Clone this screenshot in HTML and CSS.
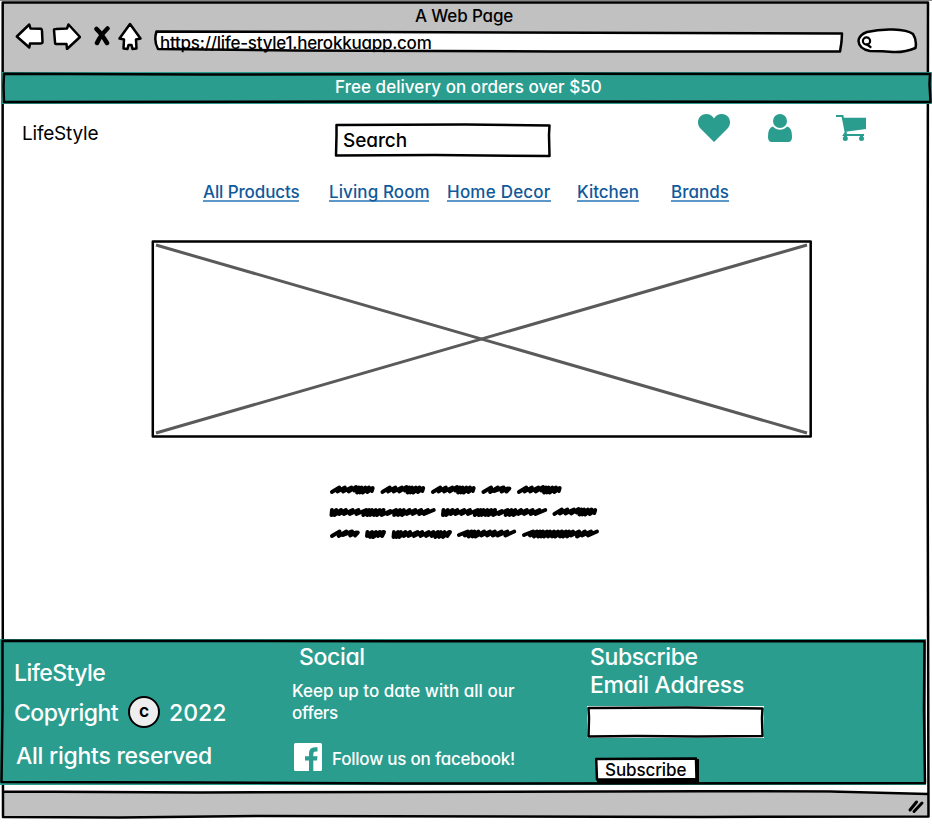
FILE: index.html
```html
<!DOCTYPE html>
<html lang="en">
<head>
<meta charset="utf-8">
<title>A Web Page</title>
<link rel="stylesheet" href="styles.css">
</head>
<body>
<div class="window">
  <svg class="sketch" viewBox="0 0 932 826" aria-hidden="true">
    <path class="gray" d="M3 2H928V74H3Z M3 792L700 791.5L928 794V816L3 817Z"/>
    <path class="edge" d="M0 .5H932"/>
    <path class="line" d="M2.700 2.500H928L927.500 400L928.500 816.500L700 817L260 816L120 817.500L3 817L2.500 400Z M3 791.500L200 792.500L700 791.200L830 791.500L928 794"/>
    <path class="grip" d="M910 810L916.500 802M914 811.500L922 803"/>
  </svg>
  <header class="toolbar">
    <div class="title"><span>A Web Page</span></div>
    <div class="controls">
      <svg class="arrow" viewBox="0 0 29 28"><path class="shape" d="M1.800 14.500L14.300 2.500L15.500 6.500L26 6.700Q27 7 27 9L27.500 20Q27.500 21.500 25 21.500L15 21.500L14.300 25.500Z"/></svg>
      <svg class="arrow" viewBox="0 0 29 28"><path class="shape" d="M2 8Q2 7 4 7L15 6.500L16.500 2.500L28 15L15 27L14.500 22L4 22Q3 22 3 20Z"/></svg>
      <svg class="stop" viewBox="0 0 17 28"><path class="stroke" d="M3.500 7Q8 11 14 21M14.500 6.500Q7 14 4 21"/></svg>
      <svg class="home" viewBox="0 0 24 30"><path class="shape" d="M12 2L22.500 16.500L18 17.500L18.500 26.500L14.500 27L13.500 23H10.500L9.500 27L5.500 26.500L6 17.500L1.500 16.500Z"/></svg>
      <div class="url">
        <svg class="sketch" viewBox="0 0 689 23" preserveAspectRatio="none"><path class="shape" d="M2.500 1.500L220 2L688 3.500L687.500 12L686 21.500L400 21.500L140 20.500L4 19Q-.5 11 2.500 1.500Z"/></svg>
        <span>https://life-style1.herokkuapp.com</span>
      </div>
      <svg class="pill" viewBox="0 0 61 26"><path class="shape" d="M10 4Q22 1 36 1.500Q51 2 56 6Q60 12 58.500 20Q48 24.500 36 24Q26 23 13 23Q2 21 1.500 13Q2 7 10 4Z"/><circle class="lens" cx="9.500" cy="13" r="3.600"/><path class="lens" d="M10 16.500L13.500 19"/></svg>
    </div>
  </header>

  <div class="banner">
    <svg class="sketch" viewBox="0 0 930 32"><path class="line" d="M2 1.800L200 2.500L560 1.800L928 2L927.500 12L928.500 30L400 29.500L2 30L1.500 14Z"/></svg>
    <span>Free delivery on orders over $50</span>
  </div>

  <main class="page">
    <div class="top">
      <span class="brand">LifeStyle</span>
      <div class="search">
        <svg class="sketch" viewBox="0 0 216 34"><path class="line" d="M1.500 2L130 1.500L214.500 2.500L214 12L214.500 33L100 32L1 32.500L1.500 12Z"/></svg>
        <span>Search</span>
      </div>
      <div class="icons">
        <svg class="heart" viewBox="0 0 32 28"><path d="M16 28L2.500 14.500C-1 11-.7 5 2.500 2.200C6.500-1.200 13-.5 16 4.500C19-.5 25.500-1.200 29.500 2.200C32.700 5 33 11 29.500 14.500Z"/></svg>
        <svg class="user" viewBox="0 0 24 28"><circle cx="12" cy="7" r="7"/><path d="M5 12.500Q8 15.800 12 15.800T19 12.500Q24 13.500 24 23Q24 28 20 28H4Q0 28 0 23Q0 13.500 5 12.500Z"/></svg>
        <svg class="cart" viewBox="0 0 30 27"><path d="M0 1H6.500L10 19M10 17L8 20H28" fill="none" stroke="#2a9d8f" stroke-width="2"/><path d="M6.500 2.700H30V14L9.500 16.700Z"/><circle cx="9.300" cy="23.500" r="2.500"/><circle cx="25.500" cy="23.500" r="2.500"/><path d="M8 19.500H11V24H8ZM24 19.500H27V24H24Z"/></svg>
      </div>
    </div>
    <nav class="nav">
      <a class="n1">All Products</a>
      <a class="n2">Living Room</a>
      <a class="n3">Home Decor</a>
      <a class="n4">Kitchen</a>
      <a class="n5">Brands</a>
    </nav>
    <svg class="hero" viewBox="0 0 661 198"><path class="line" d="M.8 1.500H658.700V196.500H.8Z"/><path class="cross" d="M4 5L655 193M4 193L655 5"/></svg>
    <svg class="scribble" viewBox="0 0 272 56">
      <defs>
        <path id="w44" transform="scale(.93 1)" d="M2 8l8-4.500-2 4 8-4-2 4 9-4-3 4 8-4.500-2 3.500 5-3-2 5 5-5-2 5 6-5-3 5 7-5-2 4.500 6-4-1 3"/>
        <path id="w29" transform="scale(.96 1)" d="M2 8l8-4.500-1 4.500 8-4.500-4 3.500 10-3.500-2 4 6-3-1 3 3-3"/>
        <path id="w20" d="M2 4l-.5 4 5-4-2 5 6-5-3 5 7-5-2 4 5-4-1 4 2-4"/>
        <path id="w59" transform="scale(.93 1)" d="M2 4l-.5 5 5-5-2 5 5-5-2 5 7-5-2 4 7-4-2 4 10-4-4 4 9-4-2 4 9-4-3 4 8-4-2 4 7-4-3 5 6-5-2 5 6-5-2 5 7-5-2 4 3-4"/>
        <path id="w58" transform="scale(.97 1)" d="M2 7l9-3.500-3 4 7-4-3 5 6-5-2 5 6-5-3 5 9-5-3 4 9-4-3 4 8-4-2 4 9-4-4 4 10-4-2 4 9-4"/>
        <path id="w104" transform="scale(.965 1)" d="M2 4l-.5 5 5-5-2 5 7-5-2 4 7-4-2 4 9-4-3 4 9-4-2 4 10-4-3 5 6-5-2 5 5-5-2 5 6-5-2 5 6-5-3 5 7-5-2 5 9-4-3 3 9-4-2 5 6-5-2 5 6-5-2 5 8-5-3 4 9-4-3 4 9-4-2 4 9-4-4 4 10-4"/>
        <path id="w78" d="M2 7l9-3.500-3 4 7-4-3 5 6-5-2 5 5-5-2 5 6-5-3 5 6-5-2 5 6-5-2 5 6-5-3 5 7-5-2 5 6-5-3 5 6-5-2 5 6-5-2 4 8-4-2 5 8-5-3 4 9-4-3 4 9-4"/>
      </defs>
      <g class="ink">
        <use href="#w44"/><use href="#w44" x="50.500"/><use href="#w44" x="101"/><use href="#w29" x="151.500"/><use href="#w44" x="187"/>
        <use href="#w104" y="22"/><use href="#w104" x="111.500" y="22"/><use href="#w44" x="222.500" y="22"/>
        <use href="#w29" y="44"/><use href="#w20" x="35.500" y="44"/><use href="#w59" x="62" y="44"/><use href="#w58" x="127" y="44"/><use href="#w78" x="192" y="44"/>
      </g>
    </svg>
  </main>

  <footer class="footer">
    <svg class="sketch" viewBox="0 0 926 146"><path class="line" d="M2.500 1.800L400 2.200L924.500 2.200L924 70L925 144L400 144.500L200 143.500L1.500 143L2.500 70Z"/></svg>
    <section class="about">
      <p class="big a1">LifeStyle</p>
      <div class="copy"><span class="big a2">Copyright</span><span class="badge">C</span><span class="big a3">2022</span></div>
      <p class="big a4">All rights reserved</p>
    </section>
    <section class="social">
      <h2 class="big">Social</h2>
      <p class="small s1">Keep up to date with all our</p>
      <p class="small s2">offers</p>
      <div class="follow">
        <svg class="fb" viewBox="0 0 28 28"><rect width="28" height="28" rx="1.500" fill="#fff"/><path d="M15 28V17.500H11V13.300H15V10.500Q15 4.300 21 4.300H23.500V8.500H21.500Q19.300 8.500 19.300 10.700V13.300H23.500L23 17.500H19.300V28Z"/></svg>
        <span class="small s3">Follow us on facebook!</span>
      </div>
    </section>
    <section class="subscribe">
      <h2 class="big u1">Subscribe</h2>
      <p class="big u2">Email Address</p>
      <div class="email"><svg class="sketch" viewBox="0 0 177 32"><path d="M0 0H177V32H0Z" fill="#fff"/><path class="shape" d="M1.500 2L100 1.500L175.500 2.500L175 12L175.500 30L110 30.500L50 30L1.500 30.500L2 12Z"/></svg></div>
      <div class="button"><svg class="sketch" viewBox="0 0 104 26"><path d="M102 2H104V26H2V23H102Z" fill="#000"/><path class="shape" d="M1.200 2L101 1.500L101.500 22L60 22.500L2 22.500Z"/></svg><span>Subscribe</span></div>
    </section>
  </footer>
</div>
</body>
</html>
```

FILE: styles.css
```css
* { box-sizing: border-box; }
body {
  margin: 0;
  background: #fff;
  color: #000;
  font: 500 17px/22px Inter, "Liberation Sans", sans-serif;
  font-feature-settings: "cv11", "ss03";
  white-space: nowrap;
}
p, h2 { margin: 0; font-weight: inherit; }
svg { display: block; flex: none; }
.window { position: relative; width: 932px; height: 826px; overflow: hidden; }
.sketch { position: absolute; inset: 0; width: 100%; height: 100%; z-index: -1; overflow: visible; }
.url, .banner, .search, .footer, .email, .button { position: relative; z-index: 0; }
.gray { fill: #c1c1c1; }
.edge { stroke: #858585; }
.line { fill: none; stroke: #000; stroke-width: 2.500px; stroke-linejoin: round; }
.shape { fill: #fff; stroke: #000; stroke-width: 2.500px; stroke-linejoin: round; }
.grip { fill: none; stroke: #000; stroke-width: 3px; stroke-linecap: round; }

.toolbar { height: 72px; padding-top: 5px; }
.title { padding-left: 415px; height: 17px; letter-spacing: -.15px; }
.controls { display: flex; height: 30px; padding-left: 15px; }
.arrow { width: 29px; height: 28px; margin-right: 8px; }
.stop { width: 17px; height: 28px; margin-left: 4px; }
.stroke { fill: none; stroke: #000; stroke-width: 4.500px; stroke-linecap: round; }
.home { width: 24px; height: 30px; margin-left: 8px; }
.url { width: 689px; height: 23px; margin: 8px 0 0 12px; padding-left: 6px; line-height: 27px; letter-spacing: -.25px; }
.pill { width: 61px; height: 26px; margin: 6px 0 0 14px; }
.lens { fill: none; stroke: #000; stroke-width: 2.200px; stroke-linecap: round; }

.banner { width: 930px; height: 32px; margin-left: 2px; padding: 4px 0 0 333px; background: #2a9d8f; color: #fff; letter-spacing: .05px; }

.page { height: 535px; }
.top { display: flex; height: 64px; padding: 9px 0 0 22px; }
.brand { width: 313px; padding-top: 10px; font-size: 19px; font-weight: 400; letter-spacing: -.2px; }
.search { width: 216px; height: 34px; margin-top: 10px; padding-left: 8px; font-size: 19px; letter-spacing: -.1px; }
.search span { display: block; padding-top: 1px; line-height: 33px; }
.icons { display: flex; margin: .5px 0 0 147px; fill: #2a9d8f; }
.heart { width: 32px; height: 28px; }
.user { width: 24px; height: 28px; margin-left: 38px; }
.cart { width: 30px; height: 27px; margin: 1px 0 0 44px; }
.nav { display: flex; height: 34px; margin: 13px 0 0 203px; color: #10599b; }
.nav a { height: 21px; border-bottom: 2px solid #5d97c8; }
.n1 { width: 96px; margin-right: 30px; letter-spacing: -.12px; }
.n2 { width: 100px; margin-right: 18px; letter-spacing: .1px; }
.n3 { width: 104px; margin-right: 26px; letter-spacing: .22px; }
.n4 { width: 62px; margin-right: 32px; }
.n5 { width: 58px; }
.hero { width: 661px; height: 198px; margin: 25px 0 0 152px; overflow: visible; }
.cross { stroke: #5a5a5a; stroke-width: 3px; }
.scribble { width: 272px; height: 56px; margin: 46px 0 0 330px; overflow: visible; }
.ink { fill: none; stroke: #000; stroke-width: 4px; stroke-linecap: round; stroke-linejoin: round; }

.footer { display: grid; grid-template-columns: 291px 298px 1fr; width: 926px; height: 146px; background: #2a9d8f; color: #fff; }
.big { font-size: 23px; line-height: 28px; }
.small { font-size: 17px; line-height: 22px; }
.about { padding: 20px 0 0 14px; }
.copy { display: flex; align-items: center; height: 32px; margin: 9px 0 14px; }
.a1 { letter-spacing: -.55px; }
.a2 { width: 114px; padding-top: 2px; letter-spacing: -.5px; }
.a3 { margin-left: 9px; padding-top: 2px; }
.a4 { padding-left: 2px; letter-spacing: -.26px; }
.badge { display: grid; place-items: center; width: 32px; height: 32px; border: 2px solid #000; border-radius: 50%; background: #eee; color: #000; font-size: 13px; font-weight: 800; }
.social { padding: 4px 0 0 1px; }
.social .big { padding-left: 7px; letter-spacing: -.35px; }
.s1 { margin-top: 9px; }
.s2 { letter-spacing: -.3px; }
.follow { display: flex; margin: 19px 0 0 2px; }
.fb { width: 28px; height: 28px; fill: #2a9d8f; }
.s3 { margin: 5px 0 0 10px; letter-spacing: -.22px; }
.subscribe { padding-top: 4px; }
.u1 { padding-left: 1px; letter-spacing: -.4px; }
.u2 { padding-left: 1px; letter-spacing: -.27px; }
.email { width: 177px; height: 32px; margin: 7px 0 19px -2px; }
.button { width: 104px; height: 26px; margin-left: 6px; padding-left: 10px; color: #000; line-height: 27px; letter-spacing: -.1px; }
```
